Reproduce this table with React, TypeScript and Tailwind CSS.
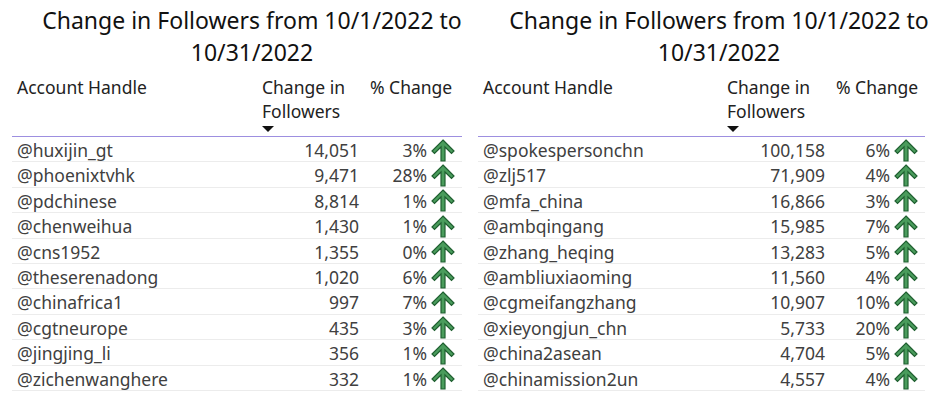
const left = [
  ["@huxijin_gt", "14,051", "3%"],
  ["@phoenixtvhk", "9,471", "28%"],
  ["@pdchinese", "8,814", "1%"],
  ["@chenweihua", "1,430", "1%"],
  ["@cns1952", "1,355", "0%"],
  ["@theserenadong", "1,020", "6%"],
  ["@chinafrica1", "997", "7%"],
  ["@cgtneurope", "435", "3%"],
  ["@jingjing_li", "356", "1%"],
  ["@zichenwanghere", "332", "1%"],
]

const right = [
  ["@spokespersonchn", "100,158", "6%"],
  ["@zlj517", "71,909", "4%"],
  ["@mfa_china", "16,866", "3%"],
  ["@ambqingang", "15,985", "7%"],
  ["@zhang_heqing", "13,283", "5%"],
  ["@ambliuxiaoming", "11,560", "4%"],
  ["@cgmeifangzhang", "10,907", "10%"],
  ["@xieyongjun_chn", "5,733", "20%"],
  ["@china2asean", "4,704", "5%"],
  ["@chinamission2un", "4,557", "4%"],
]

function UpArrow() {
  return (
    <svg width="24" height="23" viewBox="0 0 24 23" className="shrink-0">
      <polygon
        points="12,1 23,12 20.5,14.5 14,8 14,22 10,22 10,8 3.5,14.5 1,12"
        fill="#4a9c5c"
        stroke="#1f5f30"
        strokeWidth="1.2"
        strokeLinejoin="miter"
      />
    </svg>
  )
}

function FollowerTable({ rows, cols, side }: { rows: string[][]; cols: string; side: "left" | "right" }) {
  return (
    <section className={side === "left" ? "w-[470px] pl-[12px] pr-[8px]" : "w-[470px] pl-[8px] pr-[15px]"}>
      <h2 className={"flex flex-col items-center text-[23px] leading-[32px] text-[#111] pt-[4px] whitespace-nowrap " + (side === "left" ? "pl-[30px]" : "-mr-[35px]")}>
        <span>Change in Followers from 10/1/2022 to</span>
        <span>10/31/2022</span>
      </h2>

      <div className={"grid border-b border-[#9d8fe0] pt-[7px] h-[69px] text-[17.5px] leading-[24px] text-[#222] " + cols}>
        <div className="pl-[5px]">Account Handle</div>
        <div className="pl-[7px] flex flex-col">
          <span>Change in</span>
          <span>Followers</span>
          <svg width="12" height="7" viewBox="0 0 12 7" className="mt-[3px]">
            <polygon points="0,0 12,0 6,6" fill="#111" />
          </svg>
        </div>
        <div className="pl-[8px] whitespace-nowrap">% Change</div>
      </div>

      {rows.map((r, i) => (
        <div key={i} className={"grid items-center h-[25.4px] border-b border-[#ececec] text-[17.5px] text-[#404040] " + cols}>
          <div className="pl-[5px] whitespace-nowrap">{r[0]}</div>
          <div className="text-right pr-[3px]">{r[1]}</div>
          <div className="flex justify-end items-center gap-[4px] pr-[7px]">
            <span>{r[2]}</span>
            <UpArrow />
          </div>
        </div>
      ))}
    </section>
  )
}

export default function App() {
  return (
    <main className="w-[940px] h-[400px] bg-white flex overflow-hidden" style={{ fontFamily: '"Segoe UI", "Noto Sans", sans-serif' }}>
      <FollowerTable rows={left} side="left" cols="grid-cols-[243px_107px_100px]" />
      <FollowerTable rows={right} side="right" cols="grid-cols-[242px_108px_97px]" />
    </main>
  )
}
